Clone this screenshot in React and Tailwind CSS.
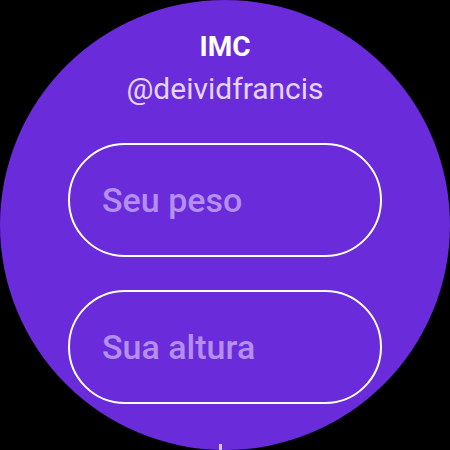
export default function App() {
  return (
    <div className="w-[450px] h-[450px] bg-black" style={{ fontFamily: "Roboto, 'Noto Sans', sans-serif" }}>
      <div className="relative w-[450px] h-[450px] rounded-full bg-[#6a2bda] overflow-hidden flex flex-col items-center">
        <h1 className="mt-[30px] text-[28px] leading-[34px] font-bold text-white">IMC</h1>
        <p className="mt-[8px] text-[30px] leading-[34px] text-[#e4d6ff]">@deividfrancis</p>

        <div className="mt-[37px] w-[314px] flex flex-col gap-[33px]">
          <div className="h-[114px] rounded-full border-2 border-white flex items-center px-[32px]">
            <span className="text-[34px] text-[#b48ff0] font-medium">Seu peso</span>
          </div>
          <div className="h-[114px] rounded-full border-2 border-white flex items-center px-[32px]">
            <span className="text-[34px] text-[#b48ff0] font-medium">Sua altura</span>
          </div>
        </div>

        {/* scroll indicator */}
        <div className="absolute left-[219px] top-[444px] w-[3px] h-[6px] bg-[#d8c8ff]" />
      </div>
    </div>
  );
}
